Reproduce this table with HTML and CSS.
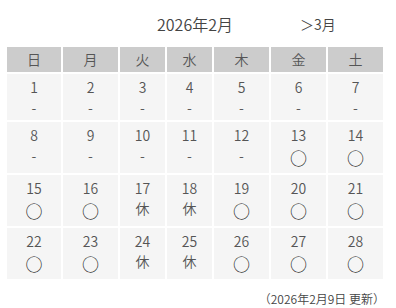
FILE: index.html
```html
<!DOCTYPE html>
<html lang="ja">
<head>
<meta charset="utf-8">
<link rel="stylesheet" href="styles.css">
</head>
<body>
<div class="cal">
  <div class="nav">
    <span class="prev"></span>
    <span class="title">2026年2月</span>
    <span class="next">＞3月</span>
  </div>
  <table class="grid">
    <colgroup>
      <col class="w54"><col class="w55"><col class="w45"><col class="w45"><col class="w55"><col class="w55"><col class="w55">
    </colgroup>
    <thead>
      <tr><th>日</th><th>月</th><th>火</th><th>水</th><th>木</th><th>金</th><th>土</th></tr>
    </thead>
    <tbody>
      <tr>
        <td><div class="num">1</div><div class="mark">-</div></td>
        <td><div class="num">2</div><div class="mark">-</div></td>
        <td><div class="num">3</div><div class="mark">-</div></td>
        <td><div class="num">4</div><div class="mark">-</div></td>
        <td><div class="num">5</div><div class="mark">-</div></td>
        <td><div class="num">6</div><div class="mark">-</div></td>
        <td><div class="num">7</div><div class="mark">-</div></td>
      </tr>
      <tr>
        <td><div class="num">8</div><div class="mark">-</div></td>
        <td><div class="num">9</div><div class="mark">-</div></td>
        <td><div class="num">10</div><div class="mark">-</div></td>
        <td><div class="num">11</div><div class="mark">-</div></td>
        <td><div class="num">12</div><div class="mark">-</div></td>
        <td><div class="num">13</div><div class="mark ok">○</div></td>
        <td><div class="num">14</div><div class="mark ok">○</div></td>
      </tr>
      <tr>
        <td><div class="num">15</div><div class="mark ok">○</div></td>
        <td><div class="num">16</div><div class="mark ok">○</div></td>
        <td><div class="num">17</div><div class="mark">休</div></td>
        <td><div class="num">18</div><div class="mark">休</div></td>
        <td><div class="num">19</div><div class="mark ok">○</div></td>
        <td><div class="num">20</div><div class="mark ok">○</div></td>
        <td><div class="num">21</div><div class="mark ok">○</div></td>
      </tr>
      <tr>
        <td><div class="num">22</div><div class="mark ok">○</div></td>
        <td><div class="num">23</div><div class="mark ok">○</div></td>
        <td><div class="num">24</div><div class="mark">休</div></td>
        <td><div class="num">25</div><div class="mark">休</div></td>
        <td><div class="num">26</div><div class="mark ok">○</div></td>
        <td><div class="num">27</div><div class="mark ok">○</div></td>
        <td><div class="num">28</div><div class="mark ok">○</div></td>
      </tr>
    </tbody>
  </table>
  <p class="updated">（2026年2月9日 更新）</p>
</div>
</body>
</html>
```

FILE: styles.css
```css
html, body {
  margin: 0;
  padding: 0;
  background: #ffffff;
}
body {
  font-family: "Noto Sans CJK JP", "Noto Sans", sans-serif;
  font-weight: 350;
  color: #555555;
}
.cal {
  width: 380px;
  padding: 0 5px;
}
.nav {
  display: grid;
  grid-template-columns: 1fr auto 1fr;
  align-items: center;
  height: 47px;
}
.title {
  font-size: 16px;
  color: #444444;
}
.next {
  font-size: 14px;
  color: #444444;
  padding-left: 67px;
}
.grid {
  width: 380px;
  border-collapse: separate;
  border-spacing: 2px;
  table-layout: fixed;
  margin: -2px 0 0 0;
}
.w54 { width: 54px; }
.w55 { width: 55px; }
.w45 { width: 45px; }
.grid th {
  background: #cccccc;
  height: 25px;
  padding: 0;
  font-weight: 350;
  font-size: 14px;
  line-height: 25px;
  color: #555555;
}
.grid td {
  background: #f5f5f5;
  padding: 3px 0;
  text-align: center;
  vertical-align: top;
}
.num {
  font-size: 14px;
  line-height: 20px;
}
.mark {
  font-size: 14px;
  line-height: 20px;
}
.mark.ok {
  font-size: 17px;
  line-height: 25px;
  color: #222222;
}
.updated {
  margin: 9px 0 0 0;
  text-align: right;
  font-size: 12px;
  line-height: 18px;
  color: #444444;
}
```
